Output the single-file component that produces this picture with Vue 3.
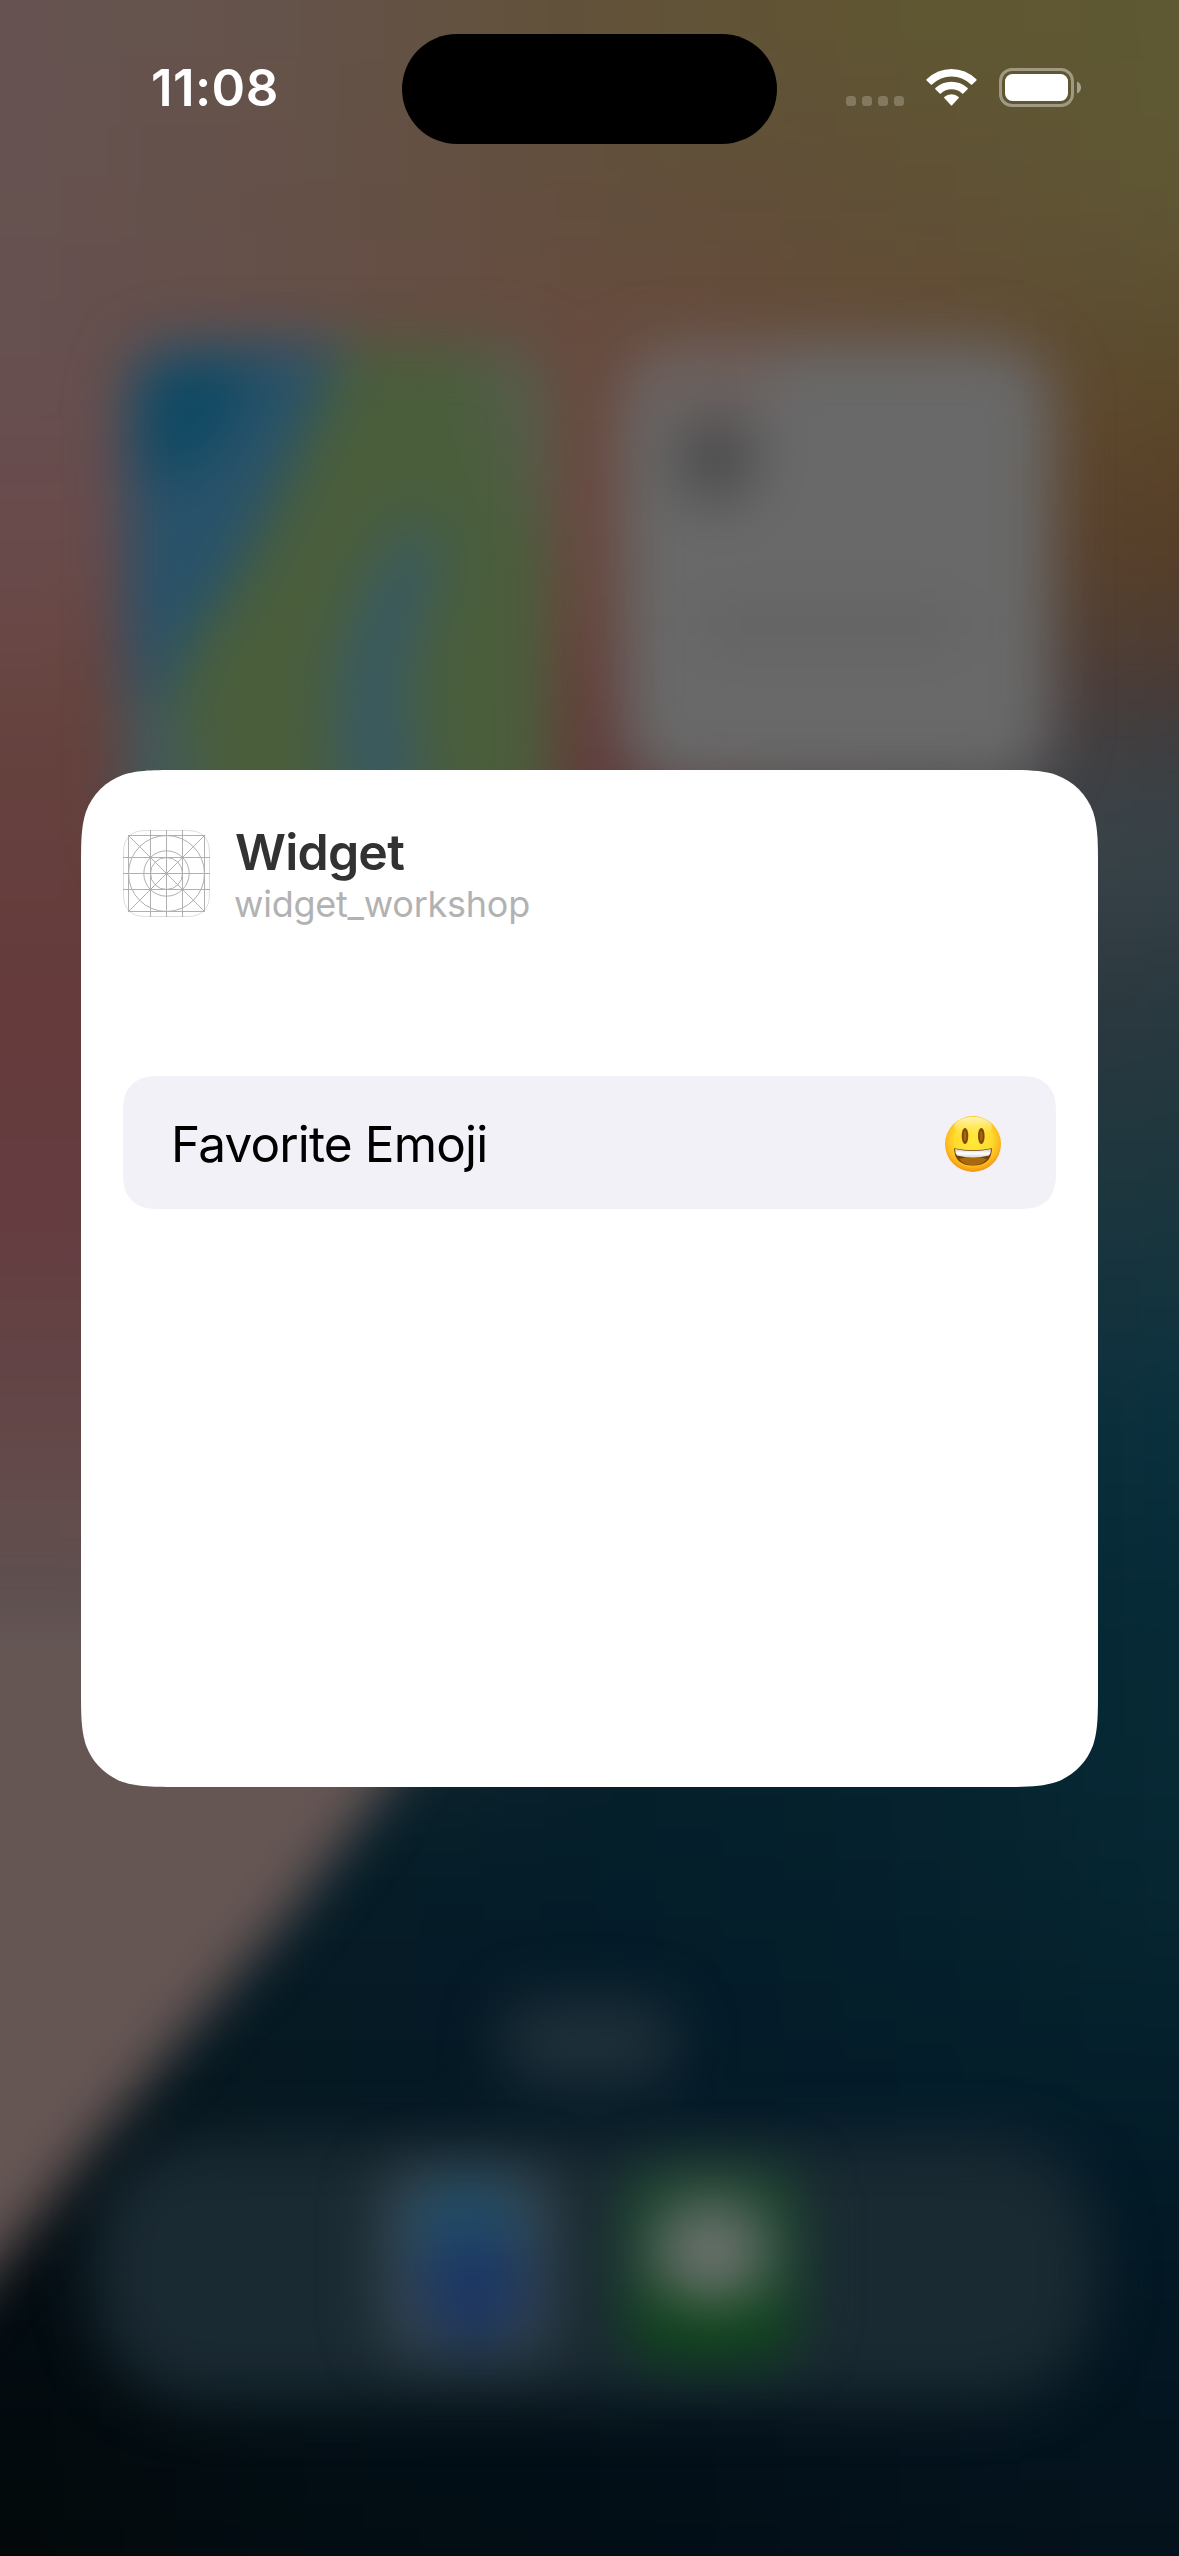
<script setup>
// Wallpaper colours sampled on a coarse grid: five columns for every row height.
const rows = [
  [0, '665352', '64534a', '615238', '5f5632', '5e5a31'],
  [200, '665250', '655048', '624e3d', '604f36', '5f5735'],
  [300, '665051', '655048', '664c3e', '624d36', '5c4f30'],
  [400, '674f50', '664d48', '69493e', '67493a', '5a4829'],
  [520, '694b4c', '68494a', '6a483f', '604838', '573f26'],
  [600, '6a4a4a', '674740', '69473f', '5a4436', '533d2b'],
  [700, '66443f', '66413c', '663e39', '504040', '453b3a'],
  [780, '65413e', '653e3a', '613c3a', '45404a', '394044'],
  [840, '65403e', '653e3a', '603c3a', '40434a', '374449'],
  [1000, '653b3b', '643b3b', '503b3b', '30383c', '2a383f'],
  [1200, '653c40', '643c40', '403a40', '20363e', '1b363e'],
  [1400, '634546', '634546', '303a40', '102c38', '0b313e'],
  [1600, '625250', '635250', '102028', '06222e', '062b37'],
  [1800, '081c26', '08202a', '041f2a', '05222e', '072934'],
  [2000, '08181e', '061a24', '041a28', '041e2a', '04222d'],
  [2200, '060f14', '051720', '041824', '041a28', '031a27'],
  [2400, '030a0e', '030f15', '031019', '04131c', '031520'],
  [2556, '030909', '020c12', '020d14', '03101a', '04121b']
].map(([y, ...c]) => ({
  y,
  c: c.map(h => [0, 2, 4].map(i => parseInt(h.slice(i, i + 2), 16)))
}))

const mix = (a, b, t) => a.map((v, i) => v + (b[i] - v) * t)

function colourAt(x, y) {
  const cy = Math.min(Math.max(y, 0), 2555)
  const cx = Math.min(Math.max(x / 295, 0), 3.999)
  const r = rows.findIndex((row, i) => i < rows.length - 1 && cy < rows[i + 1].y)
  const t = (cy - rows[r].y) / (rows[r + 1].y - rows[r].y)
  const k = Math.floor(cx)
  const top = mix(rows[r].c[k], rows[r].c[k + 1], cx - k)
  const bottom = mix(rows[r + 1].c[k], rows[r + 1].c[k + 1], cx - k)
  return `rgb(${mix(top, bottom, t).map(Math.round).join(',')})`
}

const cells = []
for (let y = -120; y < 2680; y += 60) {
  for (let x = -120; x < 1300; x += 60) {
    cells.push({ x, y, fill: colourAt(x + 30, y + 30) })
  }
}

// Rounded rectangle with continuous (smoothed) corners.
function smoothRect(w, h, r) {
  const a = 1.528665 * r, b = 1.088493 * r, c = 0.868407 * r
  const d = 0.631494 * r, e = 0.074911 * r, f = 0.372824 * r, g = 0.16906 * r
  return `M${a} 0H${w - a}C${w - b} 0 ${w - c} 0 ${w - d} ${e}C${w - f} ${g} ${w - g} ${f} ${w - e} ${d}` +
    `C${w} ${c} ${w} ${b} ${w} ${a}V${h - a}C${w} ${h - b} ${w} ${h - c} ${w - e} ${h - d}` +
    `C${w - g} ${h - f} ${w - f} ${h - g} ${w - d} ${h - e}C${w - c} ${h} ${w - b} ${h} ${w - a} ${h}` +
    `H${a}C${b} ${h} ${c} ${h} ${d} ${h - e}C${f} ${h - g} ${g} ${h - f} ${e} ${h - d}` +
    `C0 ${h - c} 0 ${h - b} 0 ${h - a}V${a}C0 ${b} 0 ${c} ${e} ${d}C${g} ${f} ${f} ${g} ${d} ${e}C${c} 0 ${b} 0 ${a} 0Z`
}
const cardShape = smoothRect(1017, 1017, 66)
const rowShape = smoothRect(933, 133, 30)
const iconShape = smoothRect(86, 86, 19.5)
</script>

<template>
  <main class="phone">
    <svg class="backdrop" viewBox="0 0 1179 2556" aria-hidden="true">
      <g class="blur-wide">
        <rect v-for="(c, i) in cells" :key="i" :x="c.x" :y="c.y" width="61" height="61" :fill="c.fill" />
      </g>
      <g class="blur">
        <path d="M-150 1600H490L384 1787L292 1912L155 2070L38 2216L-150 2440Z" fill="#655654" />
      </g>
      <g class="blur-widgets">
        <rect x="126" y="343" width="426" height="500" rx="60" fill="#4a5e3c" />
        <path d="M186 343H345L285 480L235 580L180 655L150 843H126V403Q126 343 186 343Z" fill="#28526a" />
        <path d="M150 365H260L215 440L170 480L140 470Z" fill="#0c4863" />
        <path d="M400 343H492Q552 343 552 403V560L520 500L470 343Z" fill="#555d4b" />
        <path d="M415 510L440 560L420 620L405 690L425 800H335L340 660L370 580Z" fill="#375963" />
        <path d="M126 680L165 700L200 800H126Z" fill="#3f5a60" />
        <rect x="622" y="343" width="430" height="443" rx="60" fill="#696969" />
        <ellipse cx="716" cy="458" rx="40" ry="46" fill="#4c4b4b" />
        <rect x="640" y="345" width="140" height="60" fill="#6d6260" />
        <rect x="700" y="606" width="260" height="40" fill="#626262" />
      </g>
      <g class="blur-widgets">
        <rect x="500" y="2000" width="178" height="84" rx="42" fill="#1f3039" />
        <rect x="95" y="2140" width="1000" height="260" rx="105" fill="#1a2a32" />
      </g>
      <g class="blur-widgets">
        <rect x="380" y="2168" width="176" height="188" rx="36" fill="#374650" />
        <ellipse cx="468" cy="2232" rx="58" ry="52" fill="#21506a" />
        <ellipse cx="474" cy="2288" rx="54" ry="56" fill="#1b3664" />
        <rect x="624" y="2168" width="176" height="188" rx="36" fill="#1e4a2e" />
        <rect x="634" y="2296" width="156" height="64" rx="30" fill="#0d4519" />
        <ellipse cx="711" cy="2252" rx="56" ry="52" fill="#6a716c" />
      </g>
    </svg>

    <header class="status">
      <div class="side left"><span class="time">11:08</span></div>
      <div class="island"></div>
      <div class="side right">
        <svg class="indicators" width="240" height="50" viewBox="0 0 240 50">
          <g fill="#fff" fill-opacity=".22">
            <rect x="1" y="31" width="10" height="10" rx="3.6" />
            <rect x="17" y="31" width="10" height="10" rx="3.6" />
            <rect x="33" y="31" width="10" height="10" rx="3.6" />
            <rect x="49" y="31" width="10" height="10" rx="3.6" />
          </g>
          <g fill="#fff">
            <path d="M81.6 14.2Q92.500 4 106.500 4T131.400 14.200Q132 14.900 131.400 15.500L127.200 19.500Q126.600 20 126 19.500Q117.500 11.500 106.500 11.500T87 19.500Q86.400 20 85.800 19.500L81.600 15.500Q81 14.900 81.600 14.200Z" />
            <path d="M90.400 23Q97.400 16.700 106.500 16.700T122.600 23Q123.200 23.600 122.600 24.200L118.300 28.500Q117.700 29 117.100 28.500Q112.500 24.300 106.500 24.300T95.900 28.500Q95.300 29 94.700 28.500L90.400 24.200Q89.800 23.600 90.400 23Z" />
            <path d="M99.300 31.900Q102.300 29.300 106.500 29.300T113.700 31.900Q114.300 32.500 113.700 33.100L107.100 40.300Q106.500 40.900 105.900 40.300L99.300 33.100Q98.700 32.500 99.300 31.900Z" />
          </g>
          <rect x="155.500" y="4.500" width="72" height="36" rx="11.500" fill="none" stroke="#fff" stroke-opacity=".4" stroke-width="3" />
          <rect x="160" y="9" width="63" height="27" rx="7.500" fill="#fff" />
          <path d="M232 16.500Q236 18.300 236 22.500T232 28.500Z" fill="#fff" fill-opacity=".45" />
        </svg>
      </div>
    </header>

    <section class="card" :style="{ clipPath: `path('${cardShape}')` }">
      <div class="app">
        <svg class="app-icon" width="87" height="87" viewBox="0 0 87 87" fill="none" stroke="#b0b0b0" stroke-width="1">
          <path :d="iconShape" transform="translate(.5 .5)" stroke="#dcdcdc" />
          <rect x="5.500" y="5.500" width="76" height="76" />
          <path d="M27.500 0V87M43.500 0V87M59.500 0V87M0 27.500H87M0 43.500H87M0 59.500H87M5.500 5.500L81.500 81.500M81.500 5.500L5.500 81.500" />
          <circle cx="43.500" cy="43.500" r="38" />
          <circle cx="43.500" cy="43.500" r="22.700" />
          <circle cx="43.500" cy="43.500" r="16" />
        </svg>
        <div class="names">
          <h1 class="title">Widget</h1>
          <p class="subtitle">widget_workshop</p>
        </div>
      </div>

      <div class="row" :style="{ clipPath: `path('${rowShape}')` }">
        <span class="label">Favorite Emoji</span>
        <svg class="emoji" width="58" height="58" viewBox="0 0 58 58" role="img" aria-label="😃">
          <defs>
            <radialGradient id="face" cx=".5" cy=".42" r=".6">
              <stop offset="0" stop-color="#ffe93a" />
              <stop offset=".55" stop-color="#ffdc2e" />
              <stop offset=".8" stop-color="#fdb91f" />
              <stop offset="1" stop-color="#ee8c10" />
            </radialGradient>
            <linearGradient id="shine" x1="0" y1="0" x2="0" y2="1">
              <stop offset="0" stop-color="#fffbd0" stop-opacity=".9" />
              <stop offset="1" stop-color="#ffee50" stop-opacity="0" />
            </linearGradient>
            <linearGradient id="teeth" x1="0" y1="0" x2="0" y2="1">
              <stop offset="0" stop-color="#c9ccd0" />
              <stop offset=".5" stop-color="#fff" />
              <stop offset="1" stop-color="#d5d5d8" />
            </linearGradient>
          </defs>
          <circle cx="29" cy="29" r="28" fill="url(#face)" />
          <ellipse cx="29" cy="12" rx="19" ry="10" fill="url(#shine)" />
          <ellipse cx="21" cy="21" rx="3.300" ry="8" fill="#80480a" />
          <ellipse cx="37.300" cy="21" rx="3.300" ry="8" fill="#80480a" />
          <ellipse cx="21" cy="21" rx="1.300" ry="5" fill="#a5660f" />
          <ellipse cx="37.300" cy="21" rx="1.300" ry="5" fill="#a5660f" />
          <path d="M10 33.200Q29 37.500 48 33.200Q47.500 50.500 29 50.500T10 33.200Z" fill="#70440a" />
          <path d="M15 44Q29 39.500 43 44Q38 50.200 29 50.200T15 44Z" fill="#a9690c" />
          <path d="M11 34Q29 38 47 34Q47 38 45 40.500Q37 42.600 29 42.600T13 40.500Q11 38 11 34Z" fill="url(#teeth)" />
        </svg>
      </div>
    </section>
  </main>
</template>

<style>
body {
  background: #04121b;
}
</style>

<style scoped>
.phone {
  position: relative;
  width: 1179px;
  height: 2556px;
  overflow: hidden;
  font-family: Inter, "Noto Sans", sans-serif;
}

.backdrop {
  position: absolute;
  inset: 0;
  width: 1179px;
  height: 2556px;
}

.blur-wide {
  filter: blur(40px);
}

.blur {
  filter: blur(26px);
}

.blur-widgets {
  filter: blur(28px);
}

.status {
  position: relative;
  display: flex;
  height: 110px;
  padding-top: 34px;
}

.side {
  display: flex;
  flex: none;
  align-items: center;
  width: 402px;
  box-sizing: border-box;
}

.left {
  padding: 0 0 2px 151px;
}

.right {
  justify-content: flex-end;
  padding: 2px 94px 0 0;
}

.indicators {
  display: block;
}

.time {
  color: #fff;
  font-size: 51px;
  font-weight: 600;
  line-height: 60px;
  letter-spacing: 0.4px;
}

.island {
  width: 375px;
  height: 110px;
  border-radius: 55px;
  background: #000;
}

.card {
  position: relative;
  display: flex;
  flex-direction: column;
  gap: 159px;
  width: 1017px;
  height: 1017px;
  margin: 626px 0 0 81px;
  padding: 60px 42px;
  box-sizing: border-box;
  background: #fff;
}

.app {
  display: flex;
  gap: 25px;
  height: 87px;
}

.app-icon {
  flex: none;
}

.names {
  display: flex;
  flex-direction: column;
}

.title {
  margin: -8px 0 0;
  color: #323232;
  font-size: 50px;
  font-weight: 600;
  line-height: 60px;
  letter-spacing: -0.8px;
}

.subtitle {
  margin: 0 0 0 -1px;
  color: #b2b2b2;
  font-size: 36px;
  line-height: 44px;
  letter-spacing: -0.25px;
}

.row {
  display: flex;
  align-items: center;
  justify-content: space-between;
  height: 133px;
  padding: 2px 54px 0 48px;
  box-sizing: border-box;
  background: #f2f1f7;
}

.label {
  color: #000;
  font-size: 49.5px;
  line-height: 60px;
  letter-spacing: -0.85px;
}
</style>
